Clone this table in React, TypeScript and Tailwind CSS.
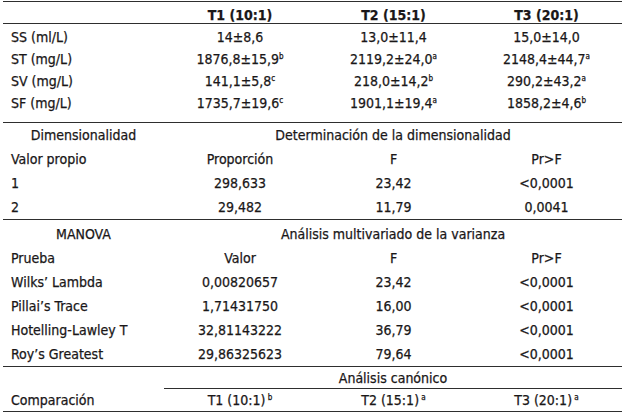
import React from "react";

const cols = "grid grid-cols-[161px_152px_155px_151px]";

function Sup({ c }: { c: string }) {
  return <sup className="text-[8px] top-[-0.6em]">{c}</sup>;
}

type Cell = React.ReactNode;

function Row({ cells, h = "h-[22px]", bold = false }: { cells: Cell[]; h?: string; bold?: boolean }) {
  return (
    <div className={`${cols} ${h} ${bold ? "font-bold" : ""}`}>
      <div className="pl-[8px] whitespace-nowrap">{cells[0]}</div>
      <div className="text-center whitespace-nowrap">{cells[1]}</div>
      <div className="text-center whitespace-nowrap">{cells[2]}</div>
      <div className="text-center whitespace-nowrap">{cells[3]}</div>
    </div>
  );
}

function TitleRow({ left, title }: { left: string; title: string }) {
  return (
    <div className={`${cols} h-[24px] leading-[24px]`}>
      <div className="text-center whitespace-nowrap">{left}</div>
      <div className="col-span-3 text-center whitespace-nowrap">{title}</div>
    </div>
  );
}

export default function App() {
  return (
    <div
      className="w-[624px] h-[414px] bg-white text-[#1a1718] text-[14px] overflow-hidden [-webkit-text-stroke:0.25px_#1a1718]"
      style={{ fontFamily: "'DejaVu Sans Condensed', 'DejaVu Sans', sans-serif", fontStretch: "condensed" }}
    >
      <div className="ml-[3px] mt-[1px] w-[619px]">
        {/* Section 1 */}
        <div className="border-t border-[#2e2e2e]">
          <div className={`${cols} h-[21px] pt-[6px] leading-[15px] font-bold`}>
            <div></div>
            <div className="text-center">T1 (10:1)</div>
            <div className="text-center">T2 (15:1)</div>
            <div className="text-center">T3 (20:1)</div>
          </div>
        </div>
        <div className="border-t border-[#2e2e2e] pt-[2px] pb-[8px] leading-[22px]">
          <Row cells={["SS (ml/L)", "14±8,6", "13,0±11,4", "15,0±14,0"]} />
          <Row cells={["ST (mg/L)", <>1876,8±15,9<Sup c="b" /></>, <>2119,2±24,0<Sup c="a" /></>, <>2148,4±44,7<Sup c="a" /></>]} />
          <Row cells={["SV (mg/L)", <>141,1±5,8<Sup c="c" /></>, <>218,0±14,2<Sup c="b" /></>, <>290,2±43,2<Sup c="a" /></>]} />
          <Row cells={["SF (mg/L)", <>1735,7±19,6<Sup c="c" /></>, <>1901,1±19,4<Sup c="a" /></>, <>1858,2±4,6<Sup c="b" /></>]} />
        </div>

        {/* Section 2 */}
        <div className="border-t border-[#2e2e2e] leading-[24px]">
          <TitleRow left="Dimensionalidad" title="Determinación de la dimensionalidad" />
          <Row h="h-[24px]" cells={["Valor propio", "Proporción", "F", "Pr>F"]} />
          <Row h="h-[24px]" cells={["1", "298,633", "23,42", "<0,0001"]} />
          <Row h="h-[24px]" cells={["2", "29,482", "11,79", "0,0041"]} />
        </div>

        {/* Section 3 */}
        <div className="border-t border-[#2e2e2e] pt-[2px] leading-[24px]">
          <TitleRow left="MANOVA" title="Análisis multivariado de la varianza" />
          <Row h="h-[24px]" cells={["Prueba", "Valor", "F", "Pr>F"]} />
          <Row h="h-[24px]" cells={["Wilks’ Lambda", "0,00820657", "23,42", "<0,0001"]} />
          <Row h="h-[24px]" cells={["Pillai’s Trace", "1,71431750", "16,00", "<0,0001"]} />
          <Row h="h-[24px]" cells={["Hotelling-Lawley T", "32,81143222", "36,79", "<0,0001"]} />
          <Row h="h-[24px]" cells={["Roy’s Greatest", "29,86325623", "79,64", "<0,0001"]} />
        </div>

        {/* Section 4 */}
        <div className="border-t border-b border-[#2e2e2e]">
          <div className={`${cols}`}>
            <div></div>
            <div className="col-span-3 text-center h-[22px] pt-[2px] leading-[19px] border-b border-[#2e2e2e] whitespace-nowrap">
              Análisis canónico
            </div>
          </div>
          <div className="leading-[22px]">
            <Row
              cells={[
                "Comparación",
                <>T1 (10:1)<Sup c=" b" /></>,
                <>T2 (15:1)<Sup c=" a" /></>,
                <>T3 (20:1)<Sup c=" a" /></>,
              ]}
            />
          </div>
        </div>
      </div>
    </div>
  );
}
